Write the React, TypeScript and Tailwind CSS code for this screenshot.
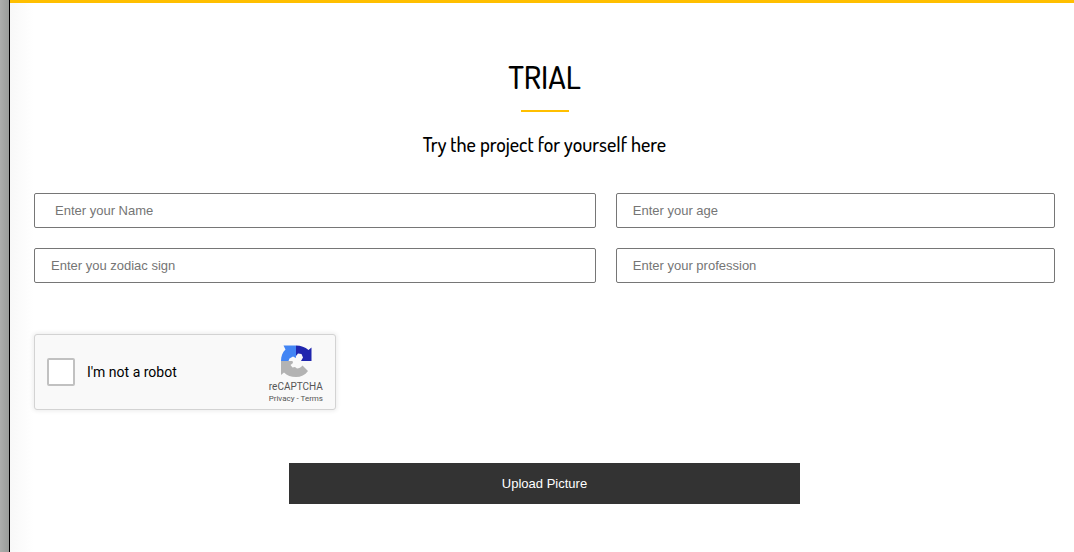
import React from "react";

const field =
  "block h-[35px] w-full rounded-[2px] border border-[#767676] bg-white pr-4 text-[13px] text-black placeholder:text-[#757575] placeholder:opacity-100";

function CaptchaLogo() {
  return (
    <svg viewBox="0 0 64 64" className="size-8" aria-hidden="true">
      <path
        fill="#2026ae"
        d="M63 32V5l-6 5C50 4 42 1 32 1v21l4-5 7 1 3 7-4 7z"
      />
      <path
        fill="#4285f4"
        d="M32 1H7l4 8C5 15 2 22 2 32h15l2-5 7-4 6 3z"
      />
      <path
        fill="#b3b3b3"
        d="M2 32v28l6-5c6 6 14 9 24 9 10 0 18-4 24-12L45 41c-3 4-7 6-11 6l-4-3-5 1-4-5 5-4-1-4z"
      />
    </svg>
  );
}

function Captcha() {
  return (
    <div className="flex h-[76px] w-[302px] items-center justify-between rounded-[3px] border border-[#d3d3d3] bg-[#f9f9f9] pr-3 pl-3 font-[Roboto,sans-serif] shadow-[0_0_4px_1px_rgba(0,0,0,0.08)]">
      <label className="flex items-center gap-3 text-sm text-black">
        <input
          type="checkbox"
          className="size-7 appearance-none rounded-[2px] border-2 border-[#c1c1c1] bg-white"
        />
        I'm not a robot
      </label>
      <div className="flex flex-col items-center pt-1.5 text-[#555]">
        <CaptchaLogo />
        <div className="mt-1 text-[10px] leading-3">reCAPTCHA</div>
        <div className="text-[8px] leading-3">
          <a href="#privacy">Privacy</a> - <a href="#terms">Terms</a>
        </div>
      </div>
    </div>
  );
}

export default function App() {
  return (
    <div className="flex min-h-screen bg-white font-['Liberation_Sans',Arial,sans-serif]">
      <div className="w-[10px] shrink-0 border-r border-black bg-linear-to-r from-[#acaeac] to-[#999c99]" />
      <main className="min-w-0 flex-1 border-t-[3px] border-[#ffbf00] bg-linear-to-r from-[#f8f8f8] to-white to-[24px] pt-[52px] pr-[19px] pb-12 pl-6">
        <header className="flex flex-col items-center font-[Dosis,Lato,sans-serif] font-medium text-black">
          <h1 className="text-[32px] leading-[44px]">TRIAL</h1>
          <div className="mt-[11px] h-[2px] w-12 bg-[#ffbf00]" />
          <p className="mt-4 text-[20px] leading-8">Try the project for yourself here</p>
        </header>
        <form onSubmit={(event) => event.preventDefault()}>
          <div className="mt-[33px] grid grid-cols-[55fr_43fr] gap-5">
            <input aria-label="Name" placeholder="Enter your Name" className={`${field} pl-5`} />
            <input aria-label="Age" placeholder="Enter your age" className={`${field} pl-4`} />
            <input aria-label="Zodiac sign" placeholder="Enter you zodiac sign" className={`${field} pl-4`} />
            <input aria-label="Profession" placeholder="Enter your profession" className={`${field} pl-4`} />
          </div>
          <div className="mt-[51px]">
            <Captcha />
          </div>
          <button type="submit" className="mx-auto mt-[53px] block h-[41px] w-1/2 bg-[#333] text-[13px] text-white">
            Upload Picture
          </button>
        </form>
      </main>
    </div>
  );
}
